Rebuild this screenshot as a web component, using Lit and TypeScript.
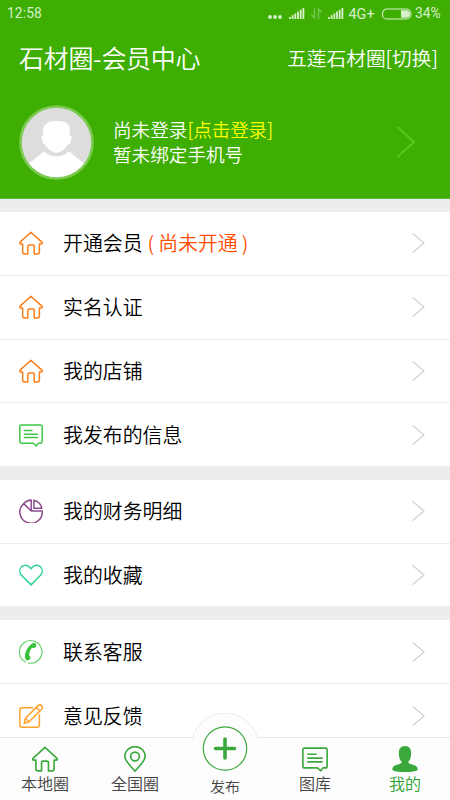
import { LitElement, html, svg, css, nothing } from "lit";
import { customElement } from "lit/decorators.js";
import { classMap } from "lit/directives/class-map.js";

const house = svg`<path d="M12 1.2 L.9 11.4 Q.2 12.8 1.8 13 H3.6 V20.8 Q3.6 23 5.6 23 H8.8 V15.4 Q8.8 14 10.2 14 H13.8 Q15.2 14 15.2 15.4 V23 H18.4 Q20.4 23 20.4 20.8 V13 H22.2 Q23.8 12.8 23.1 11.4 Z"/>`;
const message = svg`<path d="M2.3 2 H21.7 Q23.2 2 23.2 3.5 V18.6 Q23.2 20.2 21.7 20.2 H19.2 L17.4 23 L14.2 20.2 H2.3 Q.8 20.2 .8 18.6 V3.5 Q.8 2 2.3 2 Z M5.4 7.6 H13 M5.4 11.2 H18.5 M5.4 14.6 H18.5"/>`;
const icons = {
  house,
  message,
  pie: svg`<path d="M12.2 12 V1 A11.2 11.2 0 0 0 4.7 4.6 Z M4.7 4.6 A11.2 11.2 0 1 0 23.2 12 H12.2 M14.9 1.2 V9.2 H22.8 A10.5 10.5 0 0 0 14.9 1.2 Z"/>`,
  heart: svg`<path d="M12 21.9 L2.5 12.3 C.2 9.8 .2 6.2 2.6 3.8 C5 1.5 8.3 1.8 10.4 4 L12 5.7 L13.6 4 C15.7 1.8 19 1.5 21.4 3.8 C23.8 6.2 23.8 9.8 21.5 12.3 Z"/>`,
  phone: svg`<path class="thin" d="M6.5 22 A11.3 11.3 0 1 1 9.3 23"/><path class="solid" d="M12.3 4.2 C13.5 3 16 2.6 16.9 4 L17.2 6.6 C16.4 8 14.4 8.3 13 7.8 C10.9 10 10 13 10.2 15.7 C11.6 16 11.8 17.7 11 19 C10.2 20.2 8.6 20.8 7.4 20.2 C5.8 19 5.6 16 6.3 13.3 C7.2 9.6 9.5 6.3 12.3 4.2 Z"/>`,
  edit: svg`<path d="M13.6 3.8 H3.2 Q.8 3.8 .8 6.2 V20.8 Q.8 23.2 3.2 23.2 H18 Q20.4 23.2 20.4 20.8 V10.8 M5.2 19.4 L6.4 14.3 L18.8 1.9 Q20.8 0 22.7 1.7 Q24.3 3.6 22.6 5.3 L10.2 17.7 Z M17.3 3.4 L21 7 M6.4 14.5 L10 17.7"/>`,
  pin: svg`<path d="M12 23.2 C8.8 19.5 2.6 13.6 2.6 9.6 A9.4 9 0 0 1 21.4 9.6 C21.4 13.6 15.2 19.5 12 23.2 Z"/><circle cx="12" cy="9.7" r="4"/>`,
  user: svg`<path class="solid" d="M12 0 C16.5 0 18 3.4 17.6 8 C17.4 11 16.5 13.4 15 14.6 C15.2 16 16.4 16.5 18.5 17.1 C21.8 18 23.8 19.3 23.8 21.6 C23 23.4 17.5 24 12 24 S1 23.4 .2 21.6 C.2 19.3 2.2 18 5.5 17.1 C7.6 16.5 8.8 16 9 14.6 C7.5 13.4 6.6 11 6.4 8 C6 3.4 7.5 0 12 0 Z"/>`,
};
type IconName = keyof typeof icons;
type Row = { icon: IconName; tone: string; text: string; note?: string };

const groups: Row[][] = [
  [
    { icon: "house", tone: "orange", text: "开通会员", note: "尚未开通" },
    { icon: "house", tone: "orange", text: "实名认证" },
    { icon: "house", tone: "orange", text: "我的店铺" },
    { icon: "message", tone: "green", text: "我发布的信息" },
  ],
  [
    { icon: "pie", tone: "purple", text: "我的财务明细" },
    { icon: "heart", tone: "mint", text: "我的收藏" },
  ],
  [
    { icon: "phone", tone: "lime", text: "联系客服" },
    { icon: "edit", tone: "amber", text: "意见反馈" },
  ],
];

@customElement("app-root")
export class AppRoot extends LitElement {
  static styles = css`
    :host { display: flex; flex-direction: column; width: 450px; height: 800px; overflow: hidden; background: #ededed;
      font-family: "Noto Sans CJK SC", sans-serif; font-weight: 350; color: #000; }
    * { box-sizing: border-box; }
    svg { display: block; fill: none; stroke: currentColor; stroke-width: 1.5; stroke-linejoin: round; stroke-linecap: round; flex: none; }
    .solid { fill: currentColor; stroke: none; }
    .thin { stroke-width: 1.1; opacity: .8; }
    .top { flex: none; height: 199px; background: #3eae02; border-bottom: 1px solid #5cbb2c; color: #fff; }
    .status { height: 27px; display: flex; align-items: center; padding: 0 8px 0 7px; color: #d8efcc;
      font: 400 13.8px/27px Roboto, sans-serif; }
    .clock { letter-spacing: .1px; }
    .signals { margin-left: auto; }
    .pct { width: 27px; white-space: nowrap; }
    .title-bar { height: 62px; display: flex; justify-content: space-between; align-items: center; padding: 0 12px 2px 19px; }
    .title { font-size: 25px; letter-spacing: -.3px; white-space: nowrap; }
    .switch { font-size: 19.7px; white-space: nowrap; }
    .profile { height: 109px; display: flex; align-items: center; padding: 0 34px 3px 19px; }
    .avatar { width: 75px; height: 75px; }
    .who { margin-left: 19px; flex: 1; font-size: 18.6px; line-height: 25px; white-space: nowrap; padding-bottom: 2px; }
    .login { color: #ff0; letter-spacing: -.2px; }
    .more { color: #58c71c; stroke-width: 2.2; }
    .list { flex: 1; min-height: 0; overflow: hidden; padding-top: 13px; }
    .group { background: #fff; margin-bottom: 14px; }
    .row { height: 63.8px; display: flex; align-items: center; padding: .2px 25px 0 19px; border-bottom: 1.5px solid #ededed; }
    .row:last-child { height: 62.6px; border-bottom: 0; }
    .label { margin-left: 20px; flex: 1; display: flex; gap: 5px; font-size: 19.9px; line-height: 30px; white-space: nowrap; }
    .note { color: #ff4e00; display: flex; gap: 4px; }
    .chev { color: #d2d2d2; stroke-width: 1.3; }
    .orange { color: #ff7e18; }
    .green { color: #3cc748; }
    .purple { color: #8c4a8e; }
    .mint { color: #2cd392; }
    .lime { color: #35c23a; }
    .amber { color: #ffa22b; }
    .tabs { flex: none; position: relative; height: 63px; display: grid; grid-template-columns: repeat(5, 1fr);
      background: #fdfdfd; border-top: 1px solid #e5e5e5; }
    .tab { display: flex; flex-direction: column; align-items: center; padding-top: 8px; font-size: 16px; line-height: 22px;
      color: #3aa83c; }
    .tab .name { color: #444; }
    .tab.on .name { color: #2ca02e; }
    .publish { position: relative; font-size: 15px; }
    .bump { position: absolute; left: 50%; top: -25px; margin-left: -34px; }
    .disc { fill: #fdfdfd; stroke: none; }
    .tab.publish .name { margin-top: 29px; }
  `;

  private icon(name: IconName, size: number, tone = "") {
    return html`<svg class=${tone} width=${size} height=${size} viewBox="0 0 24 24">${icons[name]}</svg>`;
  }

  private tab(icon: IconName, name: string, on = false) {
    return html`<div class=${classMap({ tab: true, on })}>${this.icon(icon, 26)}<span class="name">${name}</span></div>`;
  }

  private bars(x: number) {
    return [0, 1, 2, 3, 4, 5].map(
      (i) => svg`<rect class="solid" x=${x + i * 2.7} y=${13.5 - i * 1.8} width="1.8" height=${2 + i * 1.8}/>`
    );
  }

  render() {
    return html`
      <header class="top">
        <div class="status">
          <span class="clock">12:58</span>
          <svg class="signals" width="148" height="18" viewBox="0 0 148 18">
            <circle class="solid" cx="3" cy="12" r="1.9"/><circle class="solid" cx="8" cy="12" r="1.9"/><circle class="solid" cx="13" cy="12" r="1.9"/>
            <g transform="translate(0 -1.5)">${this.bars(22)}${this.bars(61)}</g>
            <path opacity=".38" d="M47.5 4 V13 L44.8 10.2 M51.5 14 V4 L54 6.8"/>
            <text class="solid" x="81.5" y="14" font-size="14.4">4G+</text>
            <rect x="115.5" y="4" width="28.5" height="10" rx="4.5" stroke-width="1.1"/>
            <path class="solid" d="M134 5.2 H139.5 Q143 5.2 143 9 T139.5 12.8 H134 Z"/>
          </svg>
          <span class="pct">34%</span>
        </div>
        <div class="title-bar"><span class="title">石材圈-会员中心</span><span class="switch">五莲石材圈[切换]</span></div>
        <div class="profile">
          <svg class="avatar" viewBox="0 0 75 75">
            <circle cx="37.5" cy="37.5" r="36" fill="#ddd" stroke="#7bca52" stroke-width="2.6"/>
            <clipPath id="face"><circle cx="37.5" cy="37.5" r="34.7"/></clipPath>
            <g clip-path="url(#face)" fill="#fff" stroke="none">
              <path d="M27 19 Q31 15.4 38 16 Q45 15.5 48 18.5 Q51.5 21 50.7 30 Q54 31 52 35 Q51 39.5 49 39.5 Q46 44.5 41 47 Q37.5 48.5 34 47 Q28 43.5 26 39.5 Q24 39.5 23 34.5 Q21.5 31 24 30 Q23 22 27 19 Z"/>
              <path d="M9 59 L25 46.5 Q37.5 56.5 50 46.5 L66 59 V76 H9 Z"/>
            </g>
          </svg>
          <div class="who"><div>尚未登录<span class="login">[点击登录]</span></div><div>暂未绑定手机号</div></div>
          <svg class="more" width="20" height="32" viewBox="0 0 20 32"><path d="M2 1.5 L18 16 L2 30.5"/></svg>
        </div>
      </header>
      <main class="list">
        ${groups.map(
          (rows) => html`<section class="group">
            ${rows.map(
              (r) => html`<div class="row">
                ${this.icon(r.icon, 24, r.tone)}
                <div class="label"><span>${r.text}</span>${r.note
                  ? html`<span class="note"><span>(</span><span>${r.note}</span><span>)</span></span>`
                  : nothing}</div>
                <svg class="chev" width="13" height="20" viewBox="0 0 13 20"><path d="M1 .8 L12 10 L1 19.2"/></svg>
              </div>`
            )}
          </section>`
        )}
      </main>
      <nav class="tabs">
        ${this.tab("house", "本地圈")} ${this.tab("pin", "全国圈")}
        <div class="tab publish">
          <svg class="bump" width="68" height="68" viewBox="0 0 68 68">
            <circle class="disc" cx="34" cy="34" r="34"/>
            <path d="M1.6 25 A33.5 33.5 0 0 1 66.4 25" stroke="#ececec" stroke-width="1"/>
            <circle cx="34" cy="35.5" r="21.7" stroke-width="1.2"/>
            <path d="M34 26 V45 M24.5 35.5 H43.5" stroke-width="3.6"/>
          </svg>
          <span class="name">发布</span>
        </div>
        ${this.tab("message", "图库")} ${this.tab("user", "我的", true)}
      </nav>
    `;
  }
}
